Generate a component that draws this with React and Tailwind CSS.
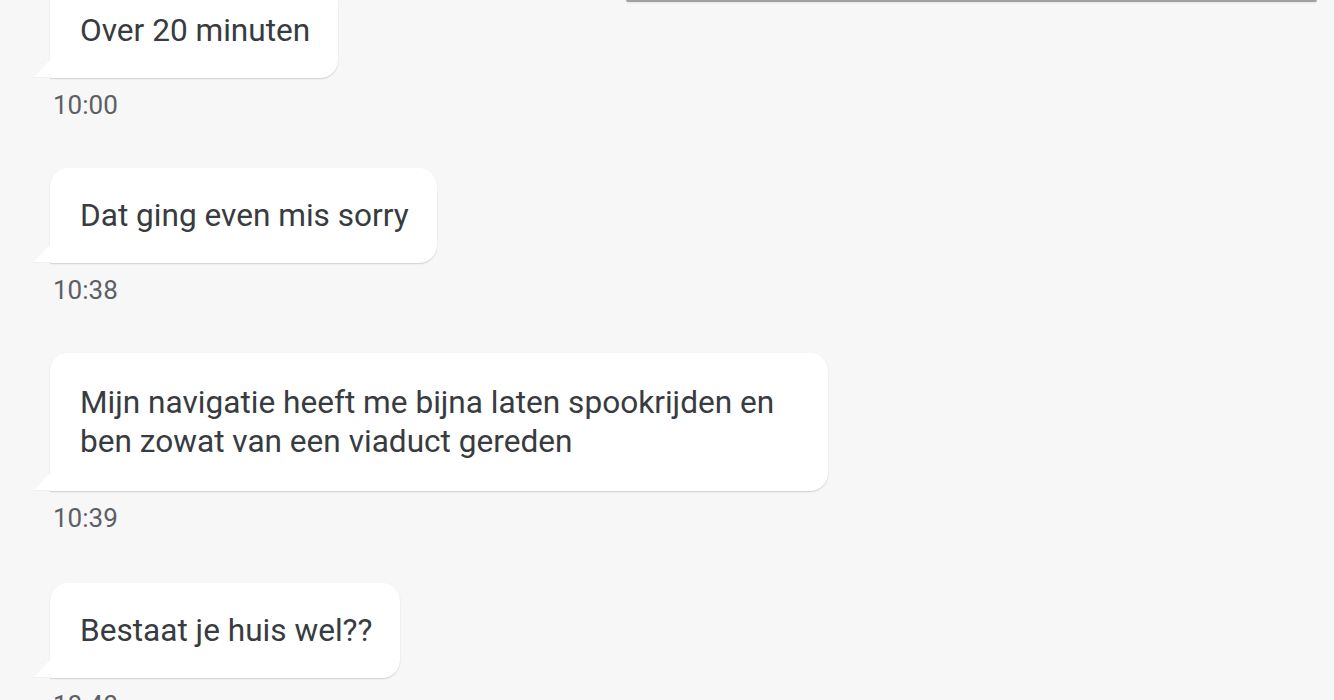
function Bubble({ children, pad = 'py-[28px]' }) {
  return (
    <div className="relative ml-[50px] self-start max-w-[778px]">
      <div
        className={`bg-white rounded-[18px] rounded-bl-none pl-[30px] pr-[28px] ${pad} text-[31.6px] leading-[39px] text-[#383b40] shadow-[0_1px_1.5px_rgba(0,0,0,0.16)]`}
      >
        {children}
      </div>
      <svg
        className="absolute bottom-0 left-[-17px]"
        width="18"
        height="19"
        viewBox="0 0 18 19"
      >
        <path d="M18 0 L18 19 L0 19 Z" fill="#ffffff" />
        <path d="M0 19 L18 19" stroke="rgba(0,0,0,0.12)" strokeWidth="1" />
      </svg>
    </div>
  )
}

function Time({ children }) {
  return (
    <div className="ml-[53px] mt-[12px] text-[26px] leading-[30px] text-[#5c6065]">
      {children}
    </div>
  )
}

export default function App() {
  return (
    <div
      className="relative w-[1334px] h-[700px] overflow-hidden bg-[#f7f7f7]"
      style={{ fontFamily: 'Roboto, "Noto Sans", sans-serif' }}
    >
      <div className="absolute top-0 left-[626px] w-[691px] h-[2px] rounded-b-full bg-[#a2a2a2] shadow-[0_1px_2px_rgba(0,0,0,0.08)]" />

      <div className="flex flex-col -mt-[17px]">
        <Bubble>Over 20 minuten</Bubble>
        <Time>10:00</Time>

        <div className="mt-[48px] flex flex-col">
          <Bubble>Dat ging even mis sorry</Bubble>
          <Time>10:38</Time>
        </div>

        <div className="mt-[48px] flex flex-col">
          <Bubble pad="py-[30px]">
            Mijn navigatie heeft me bijna laten spookrijden en ben zowat van een viaduct gereden
          </Bubble>
          <Time>10:39</Time>
        </div>

        <div className="mt-[50px] flex flex-col">
          <Bubble>Bestaat je huis wel??</Bubble>
          <Time>10:40</Time>
        </div>
      </div>
    </div>
  )
}
